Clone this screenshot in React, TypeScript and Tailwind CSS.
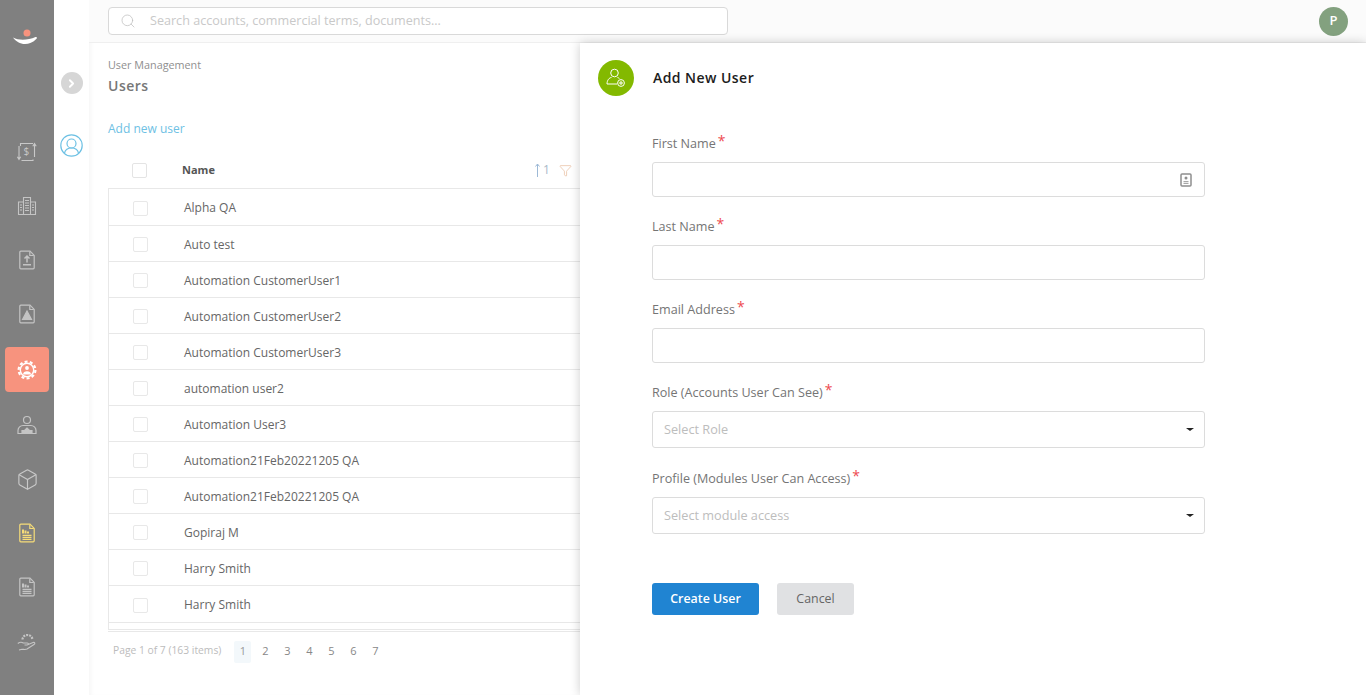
import React from 'react';
import { ChevronRight, Search, Box, Filter } from 'lucide-react';

const font = { fontFamily: '"Open Sans", sans-serif' };

const users = [
  'Alpha QA',
  'Auto test',
  'Automation CustomerUser1',
  'Automation CustomerUser2',
  'Automation CustomerUser3',
  'automation user2',
  'Automation User3',
  'Automation21Feb20221205 QA',
  'Automation21Feb20221205 QA',
  'Gopiraj M',
  'Harry Smith',
  'Harry Smith',
];

function Doc({ children, color = '#c4c4c4' }: { children: React.ReactNode; color?: string }) {
  return (
    <svg width="20" height="20" viewBox="0 0 20 20" fill="none" stroke={color} strokeWidth="1.200">
      <path d="M2.800 2.200a1 1 0 0 1 1-1h9.200l4.200 4.200v12.400a1 1 0 0 1-1 1H3.800a1 1 0 0 1-1-1z" />
      <path d="M12.800 1.500v4h4" />
      {children}
    </svg>
  );
}

function SideIcons() {
  return (
    <div className="flex flex-col items-center">
      <div className="flex h-[54px] w-full items-center justify-center">
        <svg width="20" height="20" viewBox="0 0 20 20" fill="none" stroke="#c8c8c8" strokeWidth="1.100">
          <path d="M3.500 4V1.500h12.500M16 17.500V18.500H4.500" />
          <path d="M2 4v13M.300 14.800 2 17.500l1.700-2.700M17.500 15V1.500M15.800 4.200l1.700-2.700 1.700 2.700" />
          <text x="6.400" y="13" fontSize="10" fill="#c8c8c8" stroke="none" style={font}>$</text>
        </svg>
      </div>
      <div className="flex h-[54px] w-full items-center justify-center">
        <svg width="20" height="20" viewBox="0 0 20 20" fill="none" stroke="#c4c4c4" strokeWidth="1.100">
          <path d="M6.500 18.500V1.500h7v17zM6.500 6H1.500v12.500h5M13.500 6h5v12.500h-5" />
          <path d="M8 4.500h4M8 7h4M8 9.500h4M8 12h4M8 14.500h4M3 9h2M3 11.500h2M3 14h2M15 9h2M15 11.500h2M15 14h2" />
        </svg>
      </div>
      <div className="flex h-[54px] w-full items-center justify-center">
        <Doc>
          <path d="M10 6v6.500M7.500 8.500 10 6l2.500 2.500M6 14.800h8" strokeWidth="1.500" />
        </Doc>
      </div>
      <div className="flex h-[54px] w-full items-center justify-center">
        <Doc>
          <path d="M5.500 15.500 10 7l4.500 8.500z" fill="#c4c4c4" />
        </Doc>
      </div>
      <div className="mt-[6px] flex h-[45px] w-[44px] items-center justify-center rounded-[4px] bg-[#f7937e]">
        <svg width="20" height="20" viewBox="0 0 20 20" fill="none" stroke="#fff">
          <circle cx="10" cy="10" r="8.400" strokeWidth="2.200" strokeDasharray="3 2.270" />
          <circle cx="10" cy="10" r="6.700" strokeWidth="1.400" />
          <circle cx="10" cy="8" r="1.900" fill="#fff" stroke="none" />
          <path d="M6 14.500c0-4.300 8-4.300 8 0z" fill="#fff" stroke="none" />
        </svg>
      </div>
      <div className="mt-[10px] flex h-[45px] w-full items-center justify-center">
        <svg width="20" height="20" viewBox="0 0 20 20" fill="none" stroke="#c4c4c4" strokeWidth="1.200">
          <circle cx="10" cy="5" r="3.500" />
          <path d="M1 18.500v-3c0-3 2.500-5 5-5h8c2.500 0 5 2 5 5v3z" />
          <path d="M5 18v-2.500h2.500L10 13l2.500 2.500H15V18" fill="#c4c4c4" />
        </svg>
      </div>
      <div className="mt-[5px] flex h-[54px] w-full items-center justify-center">
        <Box size={23} strokeWidth={1.200} color="#c8c8c8" />
      </div>
      <div className="flex h-[54px] w-full items-center justify-center">
        <Doc color="#f6dc78">
          <path d="M6 6.500v4M8.500 7.500v3M11 8.500v2" strokeWidth="2" />
          <path d="M5.500 12.300h9M5.500 14.300h9M5.500 16.300h9" />
        </Doc>
      </div>
      <div className="flex h-[54px] w-full items-center justify-center">
        <Doc>
          <path d="M6 6.500v4M8.500 7.500v3M11 8.500v2" strokeWidth="2" />
          <path d="M5.500 12.300h9M5.500 14.300h9M5.500 16.300h9" />
        </Doc>
      </div>
      <div className="flex h-[54px] w-full items-center justify-center">
        <svg width="20" height="20" viewBox="0 0 20 20" fill="none" stroke="#c4c4c4" strokeWidth="1.100">
          <path d="M5.500 8.500c0-5.500 9-6.500 10 0" strokeWidth="2.200" strokeDasharray="2 1" />
          <path d="M.800 12.500c2-1.500 4-1.500 5.500-.5h4c1.500 0 1.500 2-.5 2H7.500M10 14l6-2.500c1.800-.5 2.500 1 1 2l-7 4.500c-1.500.8-3 .3-5 .3L2 19" />
        </svg>
      </div>
    </div>
  );
}

function Field({ label, children }: { label: string; children: React.ReactNode }) {
  return (
    <div>
      <div className="flex h-[20px] items-center pt-[2px] text-[12.6px] text-[#757575]">
        <span>{label}</span>
        <span className="relative top-[-3px] ml-[2px] text-[14px] leading-none text-[#ee4a50]">*</span>
      </div>
      <div className="mt-[9px]">{children}</div>
    </div>
  );
}

function TextBox({ children }: { children?: React.ReactNode }) {
  return (
    <div className="flex h-[35px] items-center justify-end rounded-[3px] border border-[#dcdcdc] bg-white pr-[12px]">
      {children}
    </div>
  );
}

function SelectBox({ placeholder }: { placeholder: string }) {
  return (
    <div className="flex h-[37px] items-center justify-between rounded-[3px] border border-[#dcdcdc] bg-white pl-[11px] pr-[10px] text-[12.7px] text-[#bdbdbd]">
      <span>{placeholder}</span>
      <span className="h-0 w-0 border-x-[4px] border-t-[3px] border-x-transparent border-t-[#222]" />
    </div>
  );
}

export default function App() {
  return (
    <div className="relative flex h-[695px] w-[1366px] overflow-hidden bg-white" style={font}>
      {/* left nav */}
      <aside className="flex h-full w-[54px] shrink-0 flex-col items-center bg-[#808080]">
        <div className="flex h-[125px] w-full shrink-0 justify-center pr-[4px] pt-[28px]">
          <svg width="26" height="18" viewBox="0 0 26 18">
            <circle cx="15" cy="5" r="3.500" fill="#f7937e" />
            <path d="M1 9.500c6 3.300 15 2.800 22.500-.500 1.500-.300 1.800.8 1 1.800C21 14.500 17 16 13 16 8 16 4 13.500 1 9.500z" fill="#fff" />
          </svg>
        </div>
        <SideIcons />
      </aside>

      {/* second rail */}
      <div className="flex h-full w-[35px] shrink-0 flex-col items-center bg-white pt-[72px]">
        <div className="flex h-[22px] w-[22px] items-center justify-center rounded-full bg-[#d6d6d6]">
          <ChevronRight size={13} strokeWidth={3.500} color="#fff" />
        </div>
        <div className="mt-[40px]">
          <svg width="23" height="23" viewBox="0 0 23 23" fill="none" stroke="#6ec1e4" strokeWidth="1.200">
            <circle cx="11.500" cy="11.500" r="10.700" />
            <circle cx="11.500" cy="9.500" r="4.500" />
            <path d="M4.500 19c1-4 3.500-5 7-5s6 1 7 5" />
          </svg>
        </div>
      </div>

      {/* main */}
      <main className="flex min-w-0 flex-1 flex-col shadow-[inset_4px_0_4px_-2px_rgba(0,0,0,0.04)]">
        <header className="flex h-[43px] shrink-0 items-center justify-between border-b border-[#efefef] bg-[#fbfbfb] pl-[19px] pr-[18px]">
          <div className="flex h-[28px] w-[620px] items-center rounded-[4px] border border-[#d9d9d9] bg-white pl-[11px] text-[12.6px] text-[#c9c9c9]">
            <Search size={16} strokeWidth={1.100} color="#bdbdbd" />
            <span className="ml-[14px]">Search accounts, commercial terms, documents...</span>
          </div>
          <div className="flex h-[29px] w-[29px] items-center justify-center rounded-full bg-[#83a17f] text-[13px] font-semibold text-white">
            P
          </div>
        </header>

        <div className="pl-[19px]">
          <div className="mt-[14px] text-[10.8px] leading-[15px] text-[#8f8f8f]">User Management</div>
          <div className="mt-[4px] text-[14px] font-semibold leading-[20px] tracking-[0.5px] text-[#777]">Users</div>
          <div className="mt-[24px] text-[12px] leading-[17px] text-[#6ec1e4]">Add new user</div>

          <div className="mt-[15px] flex h-[36px] items-center text-[#555]">
            <span className="ml-[24px] h-[15px] w-[15px] rounded-[2px] border border-[#e4e4e4]" />
            <span className="ml-[35px] w-[353px] text-[11px] font-bold">Name</span>
            <span className="flex w-[20px] items-center gap-[3px] text-[12px] text-[#a9b9c9]">
              <svg width="5" height="14" viewBox="0 0 5 14" fill="none" stroke="#9db9d6" strokeWidth="1">
                <path d="M2.500 14V1M.500 3.500 2.500 1l2 2.500" />
              </svg>
              1
            </span>
            <Filter size={13} strokeWidth={1} color="#e0a77f" className="ml-[4px]" />
          </div>

          <div className="h-[442px] border-l border-[#e8e8e8]">
            <div className="border-b border-t border-[#e8e8e8]">
              {users.map((name, i) => (
                <div
                  key={i}
                  className={`flex items-center border-[#e8e8e8] pt-[2px] text-[12px] text-[#666] ${i === 11 ? 'h-[37px]' : 'h-[36px]'} ${i > 0 ? 'border-t' : ''}`}
                >
                  <span className="ml-[24px] h-[15px] w-[15px] rounded-[2px] border border-[#e8e8e8]" />
                  <span className="ml-[36px]">{name}</span>
                </div>
              ))}
            </div>
          </div>
          <div className="-mt-[1px] h-[3px] border-y border-[#e8e8e8]" />

          <div className="mt-[9px] flex items-center text-[11px]">
            <span className="ml-[5px] pb-[2px] text-[10.3px] text-[#bcbcbc]">Page 1 of 7 (163 items)</span>
            <div className="ml-[13px] mr-[3px] flex h-[22px] w-[17px] items-center justify-center rounded-[2px] bg-[#f3f8fb] pb-[2px] text-[#999]">1</div>
            {['2', '3', '4', '5', '6', '7'].map((n) => (
              <span key={n} className="flex h-[22px] w-[22px] items-center justify-center pb-[2px] text-[#888]">
                {n}
              </span>
            ))}
          </div>
        </div>
      </main>

      {/* add user drawer */}
      <section className="absolute bottom-0 right-0 top-[43px] w-[786px] bg-white shadow-[0_0_10px_rgba(0,0,0,0.2)]">
        <div className="flex items-center pl-[18px] pt-[17px]">
          <div className="flex h-[36px] w-[36px] items-center justify-center rounded-full bg-[#83b900]">
            <svg width="20" height="20" viewBox="0 0 20 20" fill="none" stroke="#fff" strokeWidth="1">
              <circle cx="8.500" cy="5" r="3.800" />
              <path d="M1 16c0-4 2.500-6.500 4.500-6.500M11.500 9.500c1 .3 1.500.7 2 1.200M1 16h10" />
              <circle cx="15" cy="15" r="3.400" />
              <path d="M15 13v4M13 15h4" />
            </svg>
          </div>
          <h2 className="ml-[19px] pb-[2px] text-[14px] font-semibold tracking-[0.45px] text-[#1c1c1c]">Add New User</h2>
        </div>

        <div className="ml-[72px] mt-[37px] w-[553px]">
          <Field label="First Name">
            <TextBox>
              <svg width="12" height="14" viewBox="0 0 12 14">
                <rect x="1" y="1" width="10" height="12" rx="1" fill="#fff" stroke="#8f8f8f" strokeWidth="1.500" />
                <circle cx="6" cy="5" r="1.500" fill="#8f8f8f" />
                <path d="M3.500 8h5v1.200h-5zM3.500 10h5v1h-5z" fill="#a8a8a8" />
              </svg>
            </TextBox>
          </Field>
          <div className="mt-[19px]">
            <Field label="Last Name">
              <TextBox />
            </Field>
          </div>
          <div className="mt-[19px]">
            <Field label="Email Address">
              <TextBox />
            </Field>
          </div>
          <div className="mt-[19px]">
            <Field label="Role (Accounts User Can See)">
              <SelectBox placeholder="Select Role" />
            </Field>
          </div>
          <div className="mt-[20px]">
            <Field label="Profile (Modules User Can Access)">
              <SelectBox placeholder="Select module access" />
            </Field>
          </div>

          <div className="mt-[49px] flex gap-[18px]">
            <button className="flex h-[32px] w-[107px] items-center justify-center rounded-[3px] bg-[#2084d2] text-[12.4px] font-semibold text-white">
              Create User
            </button>
            <button className="flex h-[32px] w-[77px] items-center justify-center rounded-[3px] bg-[#e0e1e3] text-[12.4px] text-[#666]">
              Cancel
            </button>
          </div>
        </div>
      </section>
    </div>
  );
}
